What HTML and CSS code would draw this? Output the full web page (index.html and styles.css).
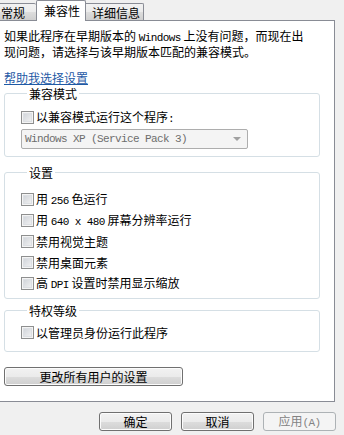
FILE: index.html
```
<!DOCTYPE html>
<html lang="zh-CN">
<head>
    <meta charset="UTF-8">
    <title>属性</title>
    <link rel="stylesheet" href="styles.css">
</head>
<body>
    <div class="tabs">
        <div class="tab first">常规</div>
        <div class="tab active">兼容性</div>
        <div class="tab last">详细信息</div>
    </div>

    <div class="panel">
        <p class="intro">如果此程序在早期版本的 <span class="en">Windows</span> 上没有问题，而现在出<br>现问题，请选择与该早期版本匹配的兼容模式。</p>
        <a class="help" href="#">帮助我选择设置</a>

        <fieldset class="group mode">
            <legend>兼容模式</legend>
            <label class="check"><span class="box"></span><span>以兼容模式运行这个程序<span class="en">:</span></span></label>
            <div class="select">
                <span class="en">Windows XP (Service Pack 3)</span>
                <span class="arrow"></span>
            </div>
        </fieldset>

        <fieldset class="group settings">
            <legend>设置</legend>
            <label class="check"><span class="box"></span><span>用 <span class="en">256</span> 色运行</span></label>
            <label class="check"><span class="box"></span><span>用 <span class="en">640 x 480</span> 屏幕分辨率运行</span></label>
            <label class="check"><span class="box"></span><span>禁用视觉主题</span></label>
            <label class="check"><span class="box"></span><span>禁用桌面元素</span></label>
            <label class="check"><span class="box"></span><span>高 <span class="en">DPI</span> 设置时禁用显示缩放</span></label>
        </fieldset>

        <fieldset class="group level">
            <legend>特权等级</legend>
            <label class="check"><span class="box"></span><span>以管理员身份运行此程序</span></label>
        </fieldset>

        <button class="btn wide">更改所有用户的设置</button>
    </div>

    <div class="footer">
        <button class="btn">确定</button>
        <button class="btn">取消</button>
        <button class="btn disabled">应用<span class="en">(A)</span></button>
    </div>
</body>
</html>
```
FILE: styles.css
```
body {
    margin: 0;
    background: #f0f0f0;
    font-family: "Noto Sans CJK SC", "Liberation Sans", sans-serif;
    font-size: 12px;
    line-height: 13px;
    color: #000;
    width: 344px;
    height: 435px;
    overflow: hidden;
}
.en {
    font-family: "Liberation Mono", monospace;
    font-size: 11px;
    letter-spacing: -0.6px;
}
.tabs {
    display: flex;
    align-items: flex-end;
    height: 20px;
    margin-left: -8px;
}
.tab {
    height: 17px;
    box-sizing: border-box;
    padding: 2px 5px 0 6px;
    border: 1px solid #898c95;
    border-bottom: none;
    background: linear-gradient(#f2f2f2, #ebebeb 50%, #dddddd 51%, #cfcfcf);
    white-space: nowrap;
}
.tab.first {
    width: 44px;
    padding-left: 8px;
    border-right: none;
    border-radius: 0 2px 0 0;
}
.tab.active {
    position: relative;
    z-index: 1;
    height: 21px;
    margin-bottom: -1px;
    padding: 3px 6px 0 7px;
    width: 50px;
    background: #fff;
    border-left: 1px solid #898c95;
    border-radius: 2px 2px 0 0;
}
.tab.last {
    width: 58px;
    border-left: none;
    border-radius: 0 2px 0 0;
}
.panel {
    margin-left: -1px;
    width: 336px;
    height: 382px;
    box-sizing: border-box;
    border: 1px solid #898c95;
    background: #fff;
    padding: 8px 0 0 4px;
    display: flex;
    flex-direction: column;
    align-items: flex-start;
}
.intro {
    margin: 0;
    white-space: nowrap;
}
.help {
    margin-top: 13px;
    color: #1f5aa5;
    text-decoration: underline;
}
.group {
    margin: 0;
    padding: 0 0 8px 16px;
    width: 316px;
    box-sizing: border-box;
    border: 1px solid #d5dfe5;
    border-radius: 3px;
    display: flex;
    flex-direction: column;
    align-items: flex-start;
}
.group legend {
    margin-left: 6px;
    padding: 0 2px;
}
.group.mode {
    margin-top: 3px;
    padding-top: 11px;
    padding-bottom: 7px;
}
.group.settings {
    margin-top: 9px;
    padding-top: 14px;
    gap: 8px;
}
.group.level {
    margin-top: 5px;
    padding-top: 9px;
    padding-bottom: 12px;
}
.check {
    display: flex;
    align-items: center;
    height: 13px;
    white-space: nowrap;
}
.box {
    width: 13px;
    height: 13px;
    box-sizing: border-box;
    border: 1px solid #8e8f8f;
    background: linear-gradient(135deg, #cbcfd5, #f6f6f6);
    box-shadow: inset 0 0 0 1px #f4f4f4, inset 0 0 0 2px #dcdfe3;
    margin-right: 2px;
}
.select {
    margin-top: 5px;
    width: 227px;
    height: 20px;
    box-sizing: border-box;
    border: 1px solid #adadad;
    border-radius: 2px;
    background: #f4f4f4;
    color: #6d6d6d;
    display: flex;
    align-items: center;
    justify-content: space-between;
    padding: 0 6px 0 3px;
}
.arrow {
    width: 0;
    height: 0;
    border-left: 4px solid transparent;
    border-right: 4px solid transparent;
    border-top: 4px solid #a0a0a0;
}
.btn {
    height: 19px;
    box-sizing: border-box;
    border: 1px solid #707070;
    border-radius: 3px;
    background: linear-gradient(#f2f2f2, #ebebeb 50%, #dddddd 51%, #cfcfcf);
    box-shadow: inset 0 0 0 1px #fcfcfc;
    font-family: inherit;
    font-size: 12px;
    line-height: 13px;
    padding: 0;
    color: #000;
}
.btn.wide {
    margin-top: 15px;
    width: 179px;
}
.footer {
    display: flex;
    justify-content: flex-end;
    gap: 9px;
    margin-top: 10px;
    padding-right: 8px;
}
.footer .btn {
    width: 73px;
}
.btn.disabled {
    border-color: #adb2b5;
    background: #f4f4f4;
    box-shadow: none;
    color: #838383;
}
```
